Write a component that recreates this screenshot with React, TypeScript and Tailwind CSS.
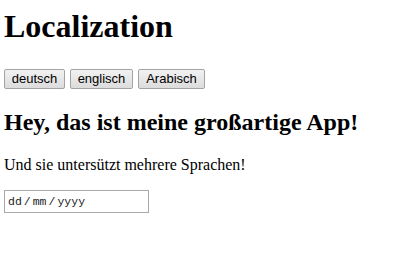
import React from "react";

const btn =
  "h-[20px] px-[6px] rounded-[2px] border border-[#a3a3a3] bg-gradient-to-b from-[#f2f2f2] to-[#dcdcdc] text-[13px] leading-[16px] text-black [font-family:'Liberation_Sans',Arial,sans-serif]";

export default function App() {
  return (
    <div className="w-[403px] h-[257px] bg-white pl-[4px] [font-family:'Liberation_Serif','Times_New_Roman',serif] text-black">
      <h1 className="pt-[8px] text-[32px] leading-[37px] font-bold">Localization</h1>
      <div className="mt-[24px] flex gap-[5px]">
        <button className={btn + " w-[61px]"}>deutsch</button>
        <button className={btn + " w-[63px]"}>englisch</button>
        <button className={btn + " w-[67px]"}>Arabisch</button>
      </div>
      <h2 className="mt-[19px] text-[24px] leading-[28px] font-bold [font-family:'Liberation_Serif','Times_New_Roman',serif]">Hey, das ist meine großartige App!</h2>
      <p className="mt-[20px] text-[16px] leading-[18px]">Und sie untersützt mehrere Sprachen!</p>
      <div className="mt-[16px] w-[145px] h-[23px] border border-[#a9a9a9] flex items-center pl-[3px] text-[11.5px] text-[#222] [font-family:'Liberation_Mono','Courier_New',monospace]">
        <span>dd</span>
        <span className="mx-[2px]">/</span>
        <span>mm</span>
        <span className="mx-[2px]">/</span>
        <span>yyyy</span>
      </div>
    </div>
  );
}
